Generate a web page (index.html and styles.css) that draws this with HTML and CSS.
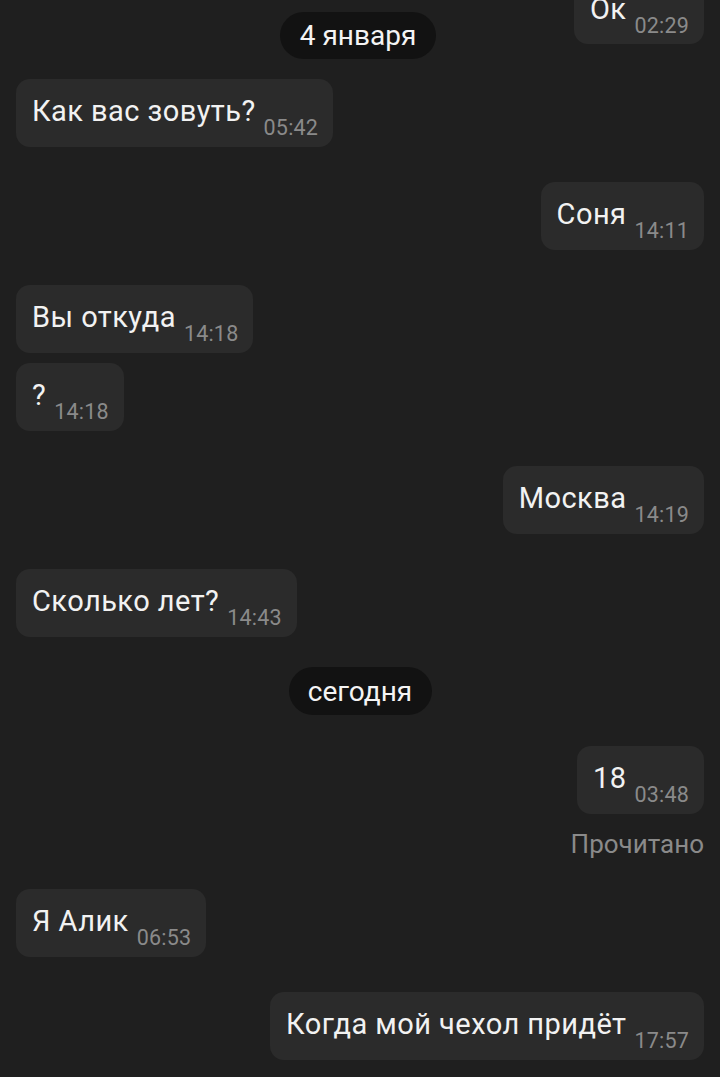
FILE: index.html
```html
<!DOCTYPE html>
<html lang="ru">
<head>
<meta charset="utf-8">
<link rel="stylesheet" href="styles.css">
</head>
<body>
<div class="chat">
  <div class="date-pill date-top">4 января</div>
  <div class="list">
    <div class="row out first"><div class="bubble"><span class="txt">Ок</span><span class="time">02:29</span></div></div>
    <div class="row in"><div class="bubble"><span class="txt">Как вас зовуть?</span><span class="time">05:42</span></div></div>
    <div class="row out"><div class="bubble"><span class="txt">Соня</span><span class="time">14:11</span></div></div>
    <div class="row in"><div class="bubble"><span class="txt">Вы откуда</span><span class="time">14:18</span></div></div>
    <div class="row in tight"><div class="bubble"><span class="txt">?</span><span class="time">14:18</span></div></div>
    <div class="row out"><div class="bubble"><span class="txt">Москва</span><span class="time">14:19</span></div></div>
    <div class="row in"><div class="bubble"><span class="txt">Сколько лет?</span><span class="time">14:43</span></div></div>
    <div class="row center"><div class="date-pill">сегодня</div></div>
    <div class="row out after-pill"><div class="bubble"><span class="txt">18</span><span class="time">03:48</span></div></div>
    <div class="row out status-row"><div class="status">Прочитано</div></div>
    <div class="row in after-status"><div class="bubble"><span class="txt">Я Алик</span><span class="time">06:53</span></div></div>
    <div class="row out"><div class="bubble"><span class="txt">Когда мой чехол придёт</span><span class="time">17:57</span></div></div>
  </div>
</div>
</body>
</html>
```
FILE: styles.css
```css
html, body {
  margin: 0;
  padding: 0;
  background: #1f1f1f;
}
body {
  width: 720px;
  height: 1077px;
  overflow: hidden;
  font-family: Roboto, "Noto Sans", sans-serif;
  color: #f2f2f2;
}
.chat {
  position: relative;
  height: 1077px;
  overflow: hidden;
}
.list {
  display: flex;
  flex-direction: column;
  padding: 0 16px;
  margin-top: -24px;
}
.row {
  display: flex;
  margin-top: 35px;
}
.row.first { margin-top: 0; }
.row.tight { margin-top: 10px; }
.row.in { justify-content: flex-start; }
.row.out { justify-content: flex-end; }
.row.center { justify-content: center; margin-top: 30px; }
.row.after-pill { margin-top: 31px; }
.row.status-row { margin-top: 16px; }
.row.after-status { margin-top: 31px; }

.bubble {
  box-sizing: border-box;
  height: 68px;
  display: flex;
  align-items: flex-start;
  padding: 15px 15px 0 16px;
  background: #2b2b2b;
  border-radius: 14px;
  white-space: nowrap;
}
.row.first .bubble { padding-top: 16px; }
.txt {
  font-size: 29px;
  line-height: 34px;
  letter-spacing: 0.45px;
}
.time {
  font-size: 21.5px;
  line-height: 24px;
  letter-spacing: 0.2px;
  color: #8a8a8a;
  margin-left: 8px;
  margin-top: 22px;
}
.date-pill {
  box-sizing: border-box;
  height: 47px;
  display: flex;
  align-items: center;
  justify-content: center;
  background: #121212;
  border-radius: 24px;
  font-size: 28px;
  color: #f4f4f4;
}
.date-top {
  position: absolute;
  top: 12px;
  left: 280px;
  width: 156px;
  z-index: 2;
}
.row.center .date-pill {
  width: 143px;
  height: 48px;
}
.status {
  font-size: 26px;
  color: #8a8a8a;
  line-height: 28px;
}
```
